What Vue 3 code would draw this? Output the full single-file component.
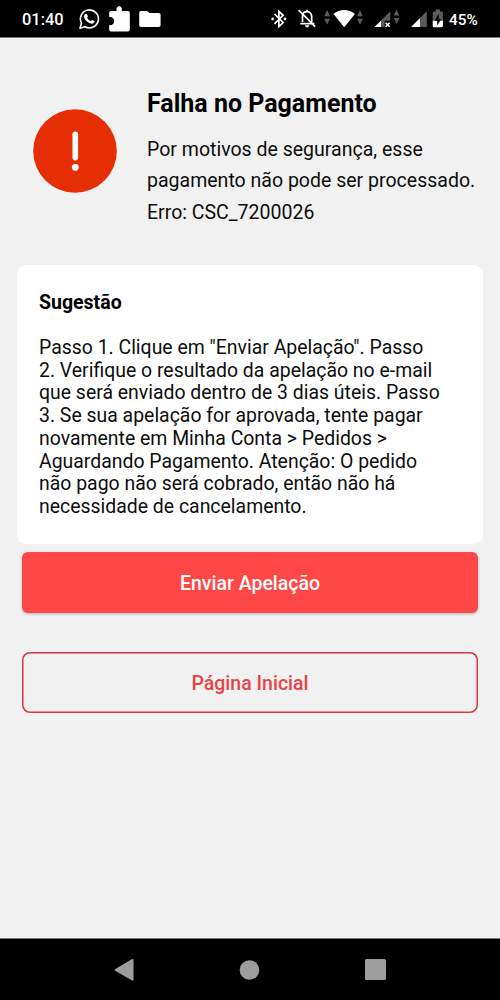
<script setup>
const description = [
  'Por motivos de segurança, esse',
  'pagamento não pode ser processado.',
  'Erro: CSC_7200026',
]
const steps = [
  'Passo 1. Clique em "Enviar Apelação". Passo',
  '2. Verifique o resultado da apelação no e-mail',
  'que será enviado dentro de 3 dias úteis. Passo',
  '3. Se sua apelação for aprovada, tente pagar',
  'novamente em Minha Conta > Pedidos >',
  'Aguardando Pagamento. Atenção: O pedido',
  'não pago não será cobrado, então não há',
  'necessidade de cancelamento.',
]
</script>

<template>
  <div class="screen">
    <header class="status">
      <span class="time">01:40</span>
      <svg class="notifications" width="84" height="37" viewBox="78 0 84 37">
        <path d="M80 28.200l1.500-5.100a9 9 0 1 1 3.500 3.600z" fill="none" stroke="#fff" stroke-width="1.600" stroke-linejoin="round" />
        <path d="M85.200 14.100c.5-.6 1.300-.6 1.700-.1l1 2.200c.2.5-.6 1.200-.8 1.600.8 1.600 2 2.700 3.600 3.300.5-.4 1-1.300 1.500-1.200l2.100 1.100c.5.3-.1 1.700-.8 2.200-1 .7-2.500.5-4-.2-2.300-1-4.100-2.700-5.100-4.800-.7-1.500-.4-3 .8-4.100z" fill="#fff" />
        <path d="M111 11h5.800c-.9-2.200.2-4.700 2.400-4.700s3.300 2.500 2.400 4.700h6.400q1.800 0 1.800 1.800v17q0 1.800-1.800 1.800h-17q-1.800 0-1.800-1.800v-4.700c2.800.6 5-1.400 5-4.100s-2.200-4.600-5-4v-4.200q0-1.800 1.800-1.800z" fill="#fff" />
        <path d="M141 11h6.300l2.100 2.100h9.400q1.800 0 1.800 1.800v10.300q0 1.800-1.800 1.800H141q-1.800 0-1.800-1.800V12.800q0-1.800 1.800-1.800z" fill="#fff" />
      </svg>
      <svg class="system" width="176" height="37" viewBox="269 0 176 37">
        <g fill="none" stroke="#fff" stroke-width="1.700">
          <path d="M274.500 14l8.600 8.500-4.200 4V11.300l4.200 4-8.600 8.500" />
          <path d="M302.500 22v-6c0-2.200 1.700-4 4-4.300 2.700-.3 5.200 1.800 5.200 4.800v5.800M300.300 23.700h14M307 11.500V9.800" />
          <path d="M298.600 10.200l16.600 16.500" />
        </g>
        <g fill="#fff">
          <circle cx="272.600" cy="18.900" r="1.300" /><circle cx="285" cy="18.900" r="1.300" />
          <path d="M305 25.200h4.200c-.3 2.700-3.900 2.700-4.200 0z" />
          <path d="M333.500 14c6-5.300 15.400-5.300 21.400 0L344.200 27.200z" />
          <path d="M374.500 27l6.800-6.700V27zM411 27l9.300-9.200V27zM432.700 20.500h10.200v5.200q0 1.500-1.500 1.500h-7.200q-1.500 0-1.500-1.500z" />
        </g>
        <g fill="#5c5c5c">
          <path d="M324.300 16.300l2.800-6.200 2.800 6.200zM324.300 18.700h5.600l-2.800 6.100zM357.200 16.300l2.800-6.200 2.800 6.200zM357.200 18.700h5.600l-2.800 6.100zM393.700 15.500l2.800-6 2.800 6zM393.700 18h5.600l-2.800 5.800z" />
          <path d="M381.300 20.300l9-9v9.400h-5.600V27h-3.400zM420.300 17.800l6.500-6.500V27h-6.500z" />
          <path d="M432.700 20.500V12.700q0-1.200 1.300-1.200h1.600V9.600h4.400v1.900h1.600q1.300 0 1.300 1.200v7.800z" />
        </g>
        <path d="M385.700 22.700l3.900 4M389.600 22.700l-3.900 4" stroke="#fff" stroke-width="1.600" />
        <path d="M438.800 13.800l-4.200 6.800h2.600v4.900l4-6.300h-2.400z" fill="#000" />
      </svg>
      <span class="percent">45%</span>
    </header>

    <main class="content">
      <section class="notice">
        <svg class="alert" width="84" height="84" viewBox="0 0 84 84">
          <circle cx="42" cy="42" r="41.800" fill="#e62e04" />
          <path d="M42.300 25.200v23.400" stroke="#fff" stroke-width="5.600" stroke-linecap="round" />
          <circle cx="42.300" cy="58.300" r="3.400" fill="#fff" />
        </svg>
        <div class="message">
          <h1>Falha no Pagamento</h1>
          <p><span v-for="line in description" :key="line">{{ line }}</span></p>
        </div>
      </section>

      <section class="card">
        <h2>Sugestão</h2>
        <p><span v-for="line in steps" :key="line">{{ line }}</span></p>
      </section>

      <div class="actions">
        <button class="primary">Enviar Apelação</button>
        <button class="secondary">Página Inicial</button>
      </div>
    </main>

    <nav class="navigation">
      <svg width="20" height="24" viewBox="0 0 20 24"><path d="M1 11.200L18.200 1.100q1.300-.6 1.300.8v19.800q0 1.400-1.300.8L1 12.700q-1-.8 0-1.500z" fill="#9d9d9d" /></svg>
      <svg width="22" height="20" viewBox="0 0 22 20"><circle cx="11.500" cy="10" r="9.800" fill="#9d9d9d" /></svg>
      <svg width="21" height="21" viewBox="0 0 21 21"><rect width="21" height="21" rx="1.500" fill="#9d9d9d" /></svg>
    </nav>
  </div>
</template>

<style>
body { margin: 0; background: #f1f1f1; }
</style>

<style scoped>
.screen {
  display: flex;
  flex-direction: column;
  width: 500px;
  height: 1000px;
  overflow: hidden;
  background: #f1f1f1;
  color: #0d0d0d;
  font-family: Roboto, "Liberation Sans", sans-serif;
}
.status {
  display: flex;
  align-items: center;
  flex: none;
  box-sizing: border-box;
  height: 38px;
  padding: 0 0 0 22px;
  border-bottom: 1px solid #777;
  background: #000;
  color: #fff;
}
.time { width: 56px; padding-top: 2px; font-size: 16.400px; font-weight: 500; line-height: 20px; }
.system { margin-left: 107px; }
.percent { margin-left: 4px; padding-top: 2px; font-size: 15.300px; font-weight: 500; line-height: 20px; }
.notifications, .system { flex: none; }
.content { flex: 1; }
.notice {
  display: flex;
  gap: 30px;
  box-sizing: border-box;
  height: 227px;
  padding: 50px 0 0 33px;
}
.alert { flex: none; margin-top: 21px; }
h1, h2, p { margin: 0; }
p span { display: block; white-space: pre; }
h1 { color: #000; font-size: 25px; font-weight: 700; line-height: 32px; white-space: nowrap; }
.message p { margin-top: 14.200px; font-size: 19.520px; line-height: 31.200px; }
.card {
  box-sizing: border-box;
  height: 279px;
  margin: 0 17px;
  padding: 25px 22px 0;
  border-radius: 9px;
  background: #fff;
}
h2 { color: #000; font-size: 19.500px; font-weight: 700; line-height: 26px; }
.card p { margin-top: 21px; font-size: 19.430px; line-height: 22.700px; }
.actions { display: flex; flex-direction: column; gap: 39px; padding: 8px 22px 0; }
button {
  box-sizing: border-box;
  height: 61px;
  padding: 2px 0 0;
  border: 0;
  border-radius: 6px;
  font: 500 19.500px Roboto, sans-serif;
}
.primary { background: #ff4747; color: #fff; box-shadow: 0 1px 3px #0004; }
.secondary { border-radius: 8px; background: transparent; box-shadow: inset 0 0 0 1.500px #db3340; color: #e84444; }
.navigation {
  display: flex;
  align-items: center;
  justify-content: space-between;
  flex: none;
  box-sizing: border-box;
  height: 62px;
  padding: 0 114.500px 0 114px;
  border-top: 1px solid #777;
  background: #000;
}
</style>
